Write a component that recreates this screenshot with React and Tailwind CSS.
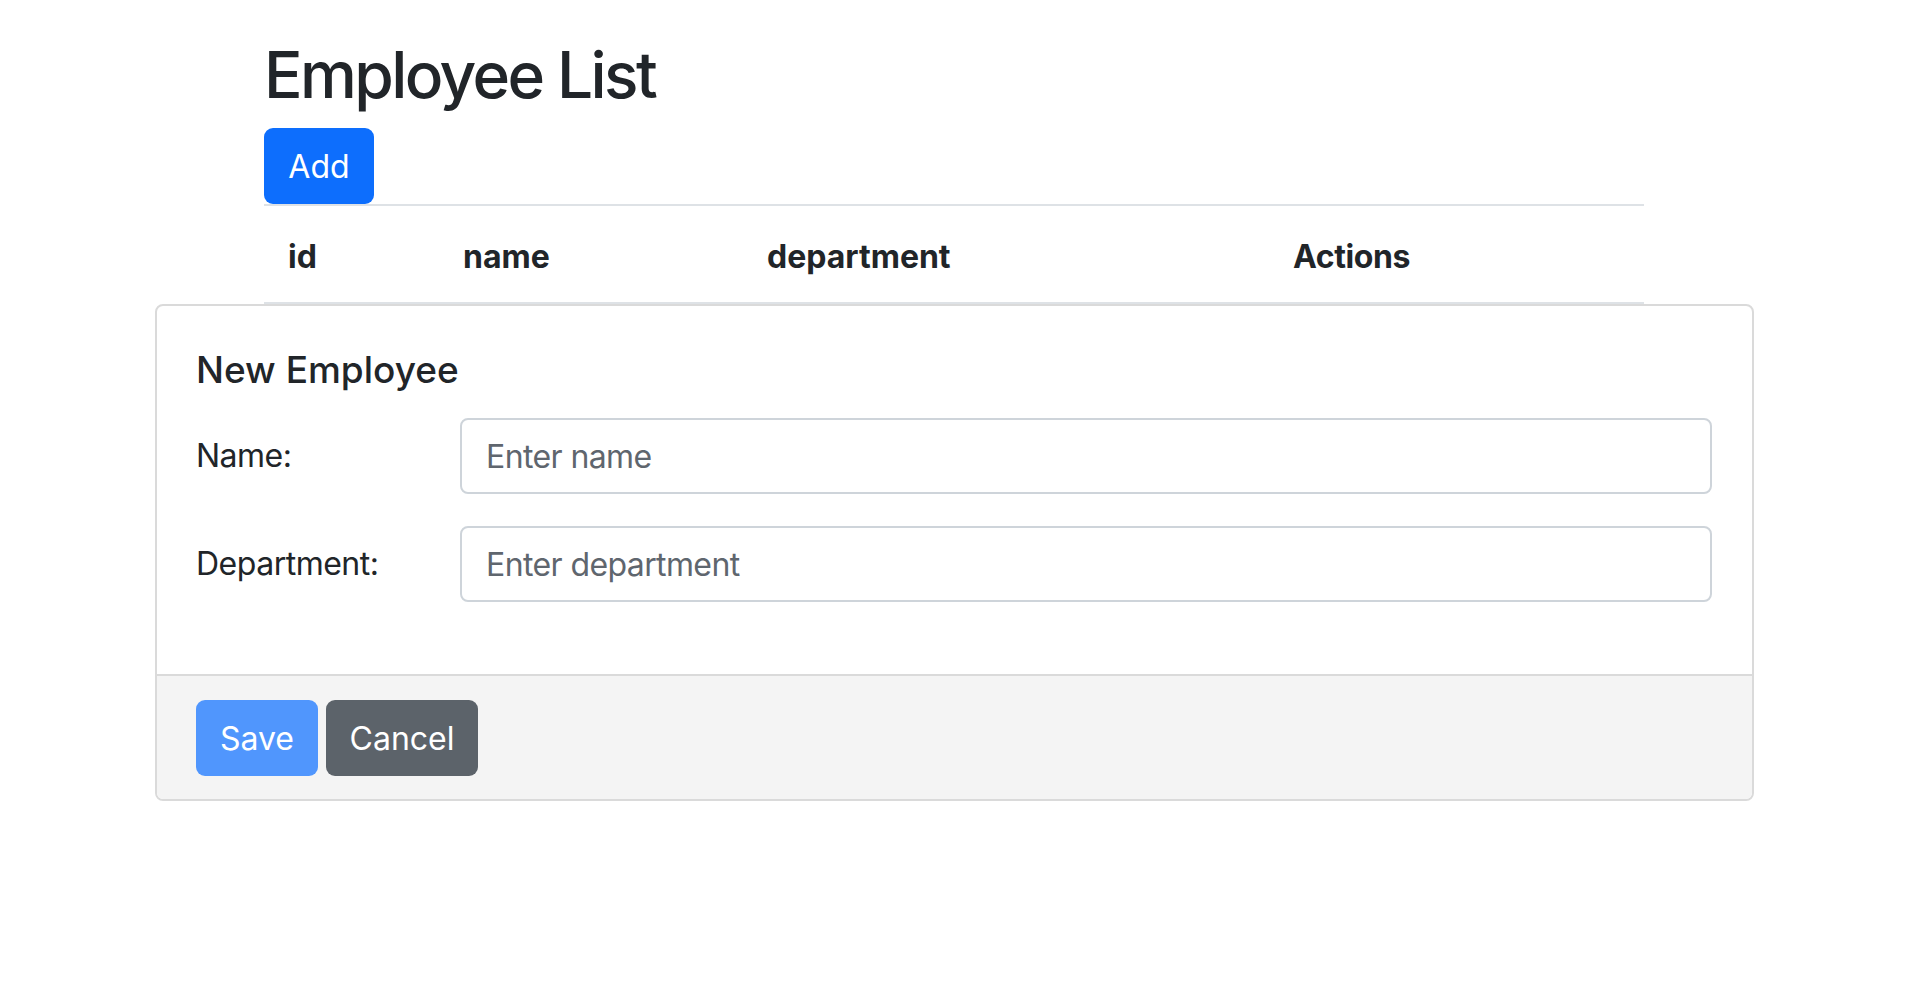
import { useState } from "react";

export default function App() {
  const [name, setName] = useState("");
  const [department, setDepartment] = useState("");

  return (
    <div className="min-h-screen bg-white text-[#212529] font-['Inter',sans-serif]">
      <div className="ml-[264px] w-[1380px]">
        <h1 className="pt-[36px] text-[64px] leading-[78px] font-medium tracking-[-2.6px]">
          Employee List
        </h1>
        <button className="mt-[14px] w-[110px] h-[76px] rounded-[9px] bg-[#0d6efd] text-white text-[32px] leading-[48px] pt-[2px] block">
          Add
        </button>
        <table className="w-full table-fixed border-t-2 border-[#dee2e6] text-left">
          <thead>
            <tr className="border-b-2 border-[#dee2e6]">
              <th className="w-[175px] px-6 pt-[27px] pb-[21px] text-[32px] leading-[48px] font-bold">id</th>
              <th className="w-[304px] px-6 pt-[27px] pb-[21px] text-[32px] leading-[48px] font-bold">name</th>
              <th className="w-[526px] px-6 pt-[27px] pb-[21px] text-[32px] leading-[48px] font-bold">department</th>
              <th className="px-6 pt-[27px] pb-[21px] text-[32px] leading-[48px] font-bold tracking-[-0.4px]">Actions</th>
            </tr>
          </thead>
        </table>
      </div>

      <div className="ml-[155px] w-[1599px] border-2 border-[#dadada] rounded-[8px] overflow-hidden">
        <div className="pt-[42px] pb-[72px] pl-[39px] pr-[40px]">
          <h5 className="text-[37px] leading-[44px] font-medium mb-[26px]">New Employee</h5>
          <div className="flex items-center mb-8">
            <label className="w-[264px] text-[32px] leading-[48px] tracking-[-0.5px]">Name:</label>
            <input
              value={name}
              onChange={(e) => setName(e.target.value)}
              placeholder="Enter name"
              className="flex-1 h-[76px] border-2 border-[#ced4da] rounded-[8px] px-[24px] text-[32px] leading-[48px] tracking-[-0.6px] placeholder:text-[#5f666e] outline-none"
            />
          </div>
          <div className="flex items-center">
            <label className="w-[264px] text-[32px] leading-[48px] tracking-[-0.5px]">Department:</label>
            <input
              value={department}
              onChange={(e) => setDepartment(e.target.value)}
              placeholder="Enter department"
              className="flex-1 h-[76px] border-2 border-[#ced4da] rounded-[8px] px-[24px] text-[32px] leading-[48px] tracking-[-0.6px] placeholder:text-[#5f666e] outline-none"
            />
          </div>
        </div>
        <div className="flex gap-2 border-t-2 border-[#dadada] bg-[#f4f4f4] pt-[24px] pb-[23px] pl-[39px]">
          <button disabled className="w-[122px] h-[76px] rounded-[9px] bg-[#5096fd] text-white text-[32px] leading-[48px] pt-[2px]">
            Save
          </button>
          <button className="w-[152px] h-[76px] rounded-[9px] bg-[#5c636a] text-white text-[32px] leading-[48px] pt-[2px]">
            Cancel
          </button>
        </div>
      </div>
    </div>
  );
}
